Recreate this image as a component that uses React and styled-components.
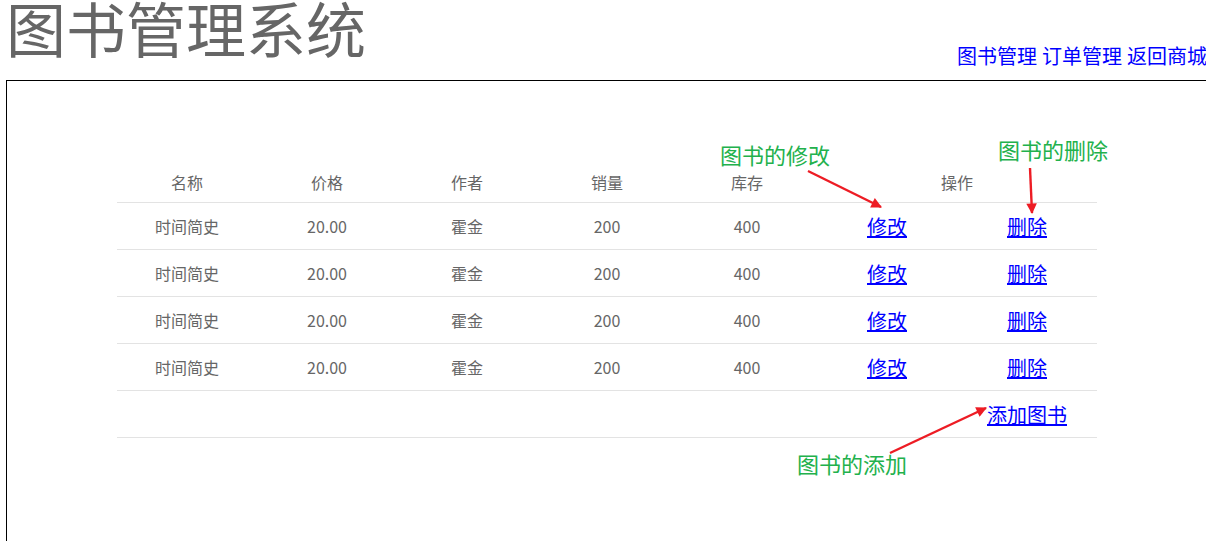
import React from "react";
import styled, { createGlobalStyle } from "styled-components";

const GlobalStyle = createGlobalStyle`
  html, body {
    margin: 0;
    padding: 0;
    background: #fff;
    overflow: hidden;
  }
  body {
    font-family: "Noto Sans CJK SC", "Noto Sans", sans-serif;
  }
`;

const Page = styled.div`
  position: relative;
  width: 1206px;
  height: 541px;
  overflow: hidden;
`;

const Header = styled.header`
  display: flex;
  justify-content: space-between;
  align-items: flex-end;
  height: 80px;
  padding-left: 6px;
  box-sizing: border-box;
`;

const Title = styled.h1`
  align-self: flex-start;
  margin: -3px 0 0;
  font-size: 60px;
  line-height: 60px;
  font-weight: normal;
  color: #666;
  letter-spacing: 0;
`;

const Nav = styled.nav`
  display: flex;
  gap: 5px;
  margin: 0 -1px 14px 0;
  font-size: 20px;
  line-height: 20px;
  white-space: nowrap;
`;

const NavLink = styled.a`
  color: #00f;
  text-decoration: none;
`;

const Panel = styled.section`
  margin-left: 6px;
  width: 1200px;
  min-height: 500px;
  border: 1px solid #000;
  padding: 81px 110px 0;
  box-sizing: content-box;
`;

const Table = styled.table`
  width: 980px;
  border-collapse: collapse;
  table-layout: fixed;
  color: #666;
  font-size: 16px;
`;

const Th = styled.th`
  height: 40px;
  padding: 0;
  font-weight: normal;
  text-align: center;
  vertical-align: middle;
  border-bottom: 1px solid #e3e3e3;
`;

const Td = styled.td`
  height: 46px;
  padding: 0;
  text-align: center;
  vertical-align: middle;
  border-bottom: 1px solid #e3e3e3;
`;

const ActionLink = styled.a`
  color: #00f;
  text-decoration: underline;
  font-size: 20px;
`;

const Note = styled.div`
  position: absolute;
  left: ${(p) => p.$x}px;
  top: ${(p) => p.$y}px;
  font-size: 22px;
  line-height: 22px;
  color: #22b14c;
  white-space: nowrap;
`;

const Arrows = styled.svg`
  position: absolute;
  left: 0;
  top: 0;
  pointer-events: none;
`;

const books = [
  { name: "时间简史", price: "20.00", author: "霍金", sales: 200, stock: 400 },
  { name: "时间简史", price: "20.00", author: "霍金", sales: 200, stock: 400 },
  { name: "时间简史", price: "20.00", author: "霍金", sales: 200, stock: 400 },
  { name: "时间简史", price: "20.00", author: "霍金", sales: 200, stock: 400 },
];

const arrows = [
  [808, 171, 881, 207],
  [1030, 168, 1032, 213],
  [890, 453, 986, 408],
];

export default function App() {
  return (
    <Page>
      <GlobalStyle />
      <Header>
        <Title>图书管理系统</Title>
        <Nav>
          <NavLink href="#">图书管理</NavLink>
          <NavLink href="#">订单管理</NavLink>
          <NavLink href="#">返回商城</NavLink>
        </Nav>
      </Header>
      <Panel>
        <Table>
          <thead>
            <tr>
              <Th>名称</Th>
              <Th>价格</Th>
              <Th>作者</Th>
              <Th>销量</Th>
              <Th>库存</Th>
              <Th colSpan={2}>操作</Th>
            </tr>
          </thead>
          <tbody>
            {books.map((b, i) => (
              <tr key={i}>
                <Td>{b.name}</Td>
                <Td>{b.price}</Td>
                <Td>{b.author}</Td>
                <Td>{b.sales}</Td>
                <Td>{b.stock}</Td>
                <Td>
                  <ActionLink href="#">修改</ActionLink>
                </Td>
                <Td>
                  <ActionLink href="#">删除</ActionLink>
                </Td>
              </tr>
            ))}
            <tr>
              <Td />
              <Td />
              <Td />
              <Td />
              <Td />
              <Td />
              <Td>
                <ActionLink href="#">添加图书</ActionLink>
              </Td>
            </tr>
          </tbody>
        </Table>
      </Panel>
      <Note $x={720} $y={143}>图书的修改</Note>
      <Note $x={998} $y={138}>图书的删除</Note>
      <Note $x={797} $y={452}>图书的添加</Note>
      <Arrows width="1206" height="541" viewBox="0 0 1206 541">
        <defs>
          <marker
            id="head"
            viewBox="0 0 10 10"
            refX="9"
            refY="5"
            markerWidth="5"
            markerHeight="4.4"
            orient="auto"
            markerUnits="strokeWidth"
          >
            <path d="M0 0 L10 5 L0 10 Z" fill="#ed1c24" />
          </marker>
        </defs>
        {arrows.map(([x1, y1, x2, y2], i) => (
          <line
            key={i}
            x1={x1}
            y1={y1}
            x2={x2}
            y2={y2}
            stroke="#ed1c24"
            strokeWidth="2.4"
            markerEnd="url(#head)"
          />
        ))}
      </Arrows>
    </Page>
  );
}
